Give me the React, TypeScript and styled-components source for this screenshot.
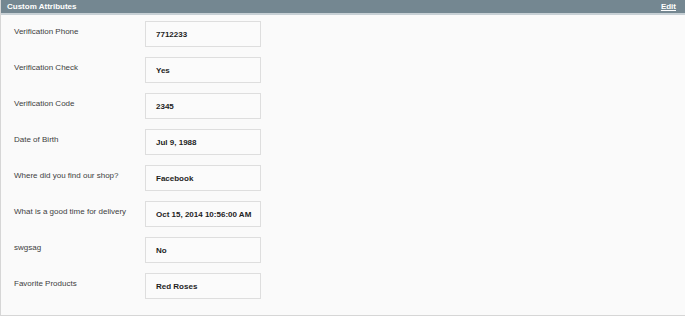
import React from 'react'
import styled, { createGlobalStyle } from 'styled-components'

const GlobalStyle = createGlobalStyle`
  html, body {
    margin: 0;
    padding: 0;
    background: #ffffff;
  }
  body {
    font-family: "Liberation Sans", Arial, sans-serif;
  }
`

const Panel = styled.div`
  width: 685px;
  box-sizing: border-box;
  border-left: 1px solid #d6d6d6;
  border-bottom: 1px solid #d6d6d6;
  background: #fafafa;
`

const Header = styled.div`
  height: 13px;
  display: flex;
  align-items: center;
  justify-content: space-between;
  padding: 0 9px 0 6px;
  background: #748791;
  border-bottom: 2px solid #c7d0d5;
`

const HeaderTitle = styled.div`
  font-size: 8px;
  font-weight: bold;
  color: #ffffff;
`

const EditLink = styled.a`
  font-size: 8px;
  font-weight: bold;
  color: #ffffff;
  text-decoration: underline;
`

const Rows = styled.div`
  display: flex;
  flex-direction: column;
  gap: 10px;
  padding: 6px 0 16px 13px;
`

const Row = styled.div`
  display: flex;
  align-items: flex-start;
`

const Label = styled.div`
  width: 131px;
  padding-top: 6px;
  font-size: 8px;
  line-height: 9px;
  color: #3e3e3e;
`

const Value = styled.div`
  width: 116px;
  height: 26px;
  box-sizing: border-box;
  display: flex;
  align-items: center;
  padding-left: 10px;
  border: 1px solid #dedede;
  background: #fbfbfb;
  font-size: 8px;
  font-weight: bold;
  color: #1e1e1e;
  white-space: nowrap;
`

const attributes = [
  ['Verification Phone', '7712233'],
  ['Verification Check', 'Yes'],
  ['Verification Code', '2345'],
  ['Date of Birth', 'Jul 9, 1988'],
  ['Where did you find our shop?', 'Facebook'],
  ['What is a good time for delivery', 'Oct 15, 2014 10:56:00 AM'],
  ['swgsag', 'No'],
  ['Favorite Products', 'Red Roses'],
]

function App() {
  return (
    <>
      <GlobalStyle />
      <Panel>
        <Header>
          <HeaderTitle>Custom Attributes</HeaderTitle>
          <EditLink>Edit</EditLink>
        </Header>
        <Rows>
          {attributes.map(([label, value]) => (
            <Row key={label}>
              <Label>{label}</Label>
              <Value>{value}</Value>
            </Row>
          ))}
        </Rows>
      </Panel>
    </>
  )
}

export default App
